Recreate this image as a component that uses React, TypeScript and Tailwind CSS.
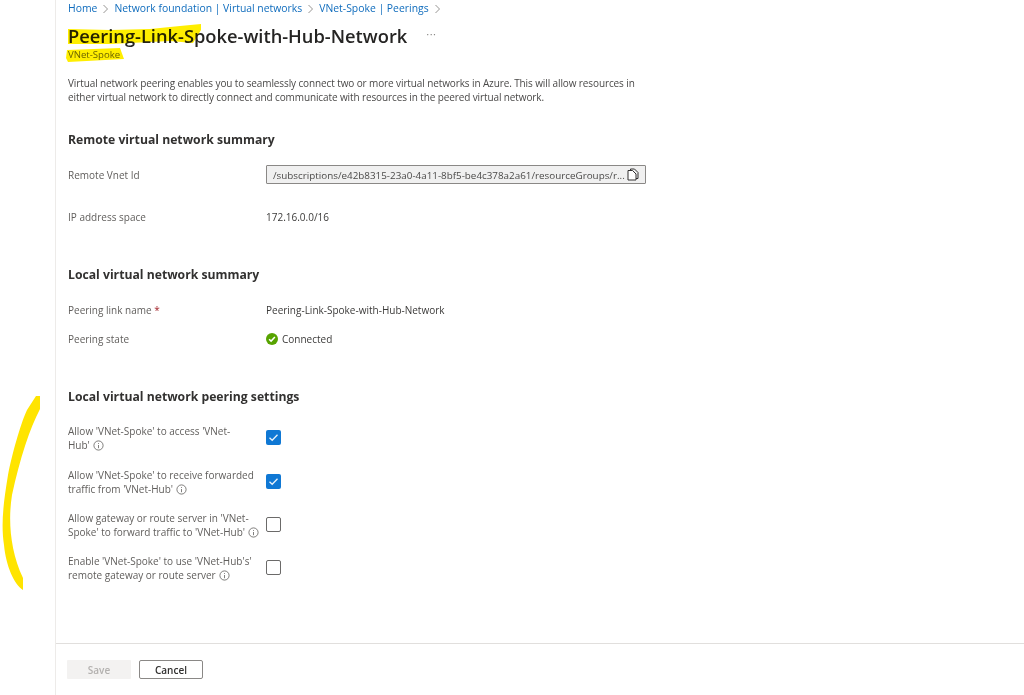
import React from "react";

const Chevron = () => (
  <svg width="7" height="10" viewBox="0 0 7 10" className="mx-[5px] shrink-0" fill="none" stroke="#8a8886" strokeWidth="0.9">
    <path d="M1.5 1 L5.5 5 L1.5 9" />
  </svg>
);

const Info = () => (
  <svg width="11" height="11" viewBox="0 0 11 11" className="inline-block ml-[3px] align-[-2px]" fill="none" stroke="#605e5c" strokeWidth="0.8">
    <circle cx="5.5" cy="5.5" r="4.6" />
    <path d="M5.5 5 V8.2" />
    <path d="M5.5 3 V3.9" />
  </svg>
);

const Box = ({ checked }: { checked?: boolean }) =>
  checked ? (
    <div className="w-[15px] h-[15px] rounded-[2px] bg-[#0f78d4] flex items-center justify-center">
      <svg width="11" height="11" viewBox="0 0 11 11" fill="none" stroke="#e8f2fb" strokeWidth="1.3">
        <path d="M1.5 5.8 L4.2 8.3 L9.5 2.8" />
      </svg>
    </div>
  ) : (
    <div className="w-[15px] h-[15px] rounded-[2px] border border-[#6b6a69] bg-white" />
  );

const H2 = ({ children, cls }: { children: React.ReactNode; cls: string }) => (
  <h2 className={`text-[12.2px] leading-[18px] font-bold text-[#323130] ${cls}`}>{children}</h2>
);

const Row = ({ label, children, cls }: { label: React.ReactNode; children: React.ReactNode; cls: string }) => (
  <div className={`flex items-center h-[14px] ${cls}`}>
    <div className="w-[198px] shrink-0">{label}</div>
    <div className="flex items-center text-[#3b3a39]">{children}</div>
  </div>
);

const CheckRow = ({ lines, checked, cls }: { lines: [string, string]; checked?: boolean; cls: string }) => (
  <div className={`flex items-center ${cls}`}>
    <div className="w-[198px] shrink-0 leading-[14px] h-[28px] whitespace-nowrap">
      <div>{lines[0]}</div>
      <div>
        {lines[1]}
        <Info />
      </div>
    </div>
    <div className="-mt-[2px]">
      <Box checked={checked} />
    </div>
  </div>
);

export default function App() {
  return (
    <div
      className="relative w-[1024px] h-[695px] overflow-hidden bg-white text-[10px] text-[#605e5c]"
      style={{ fontFamily: '"Open Sans", "Noto Sans", sans-serif' }}
    >
      <div className="ml-[55px] h-full border-l border-[#edebe9] flex flex-col">
        <div className="flex-1 pl-[12px] pt-[2px]">
          <nav className="flex items-center h-[14px] text-[#0f6cbd] text-[10.4px]">
            <span>Home</span>
            <Chevron />
            <span>Network foundation | Virtual networks</span>
            <Chevron />
            <span>VNet-Spoke | Peerings</span>
            <Chevron />
          </nav>
          <div className="flex items-center mt-[8px] h-[24px]">
            <h1 className="text-[18.3px] leading-[24px] font-semibold text-[#252423] whitespace-nowrap">
              Peering-Link-Spoke-with-Hub-Network
            </h1>
            <span className="ml-[19px] text-[#8a8886] text-[11px] tracking-[0.5px] -mt-[3px]">···</span>
          </div>
          <div className="h-[14px] leading-[14px] text-[9.6px] text-[#6b6a3a]">VNet-Spoke</div>
          <div className="mt-[14px] leading-[14px] text-[#4a4948] whitespace-nowrap tracking-[-0.11px]">
            <div>Virtual network peering enables you to seamlessly connect two or more virtual networks in Azure. This will allow resources in</div>
            <div>either virtual network to directly connect and communicate with resources in the peered virtual network.</div>
          </div>

          <H2 cls="mt-[27px]">Remote virtual network summary</H2>
          <div className="flex items-center mt-[16px] h-[19px]">
            <div className="w-[198px] shrink-0 pt-[2px]">Remote Vnet Id</div>
            <div className="w-[380px] h-[19px] bg-[#f0f0f0] border border-[#8a8886] rounded-[1px] flex items-center justify-between pl-[6px] pr-[6px] text-[#4a4948] whitespace-nowrap">
              <span className="text-[9.85px] pt-[1px]">/subscriptions/e42b8315-23a0-4a11-8bf5-be4c378a2a61/resourceGroups/r...</span>
              <svg width="12" height="13" viewBox="0 0 12 13" fill="none" stroke="#323130" strokeWidth="1" className="shrink-0">
                <path d="M3.5 2.5 V1 H7.5 L11 4.5 V10.5 H9" />
                <path d="M1 2.5 H5.5 L9 6 V12 H1 Z" fill="#fff" />
              </svg>
            </div>
          </div>
          <Row label="IP address space" cls="mt-[26px]">172.16.0.0/16</Row>

          <H2 cls="mt-[42px]">Local virtual network summary</H2>
          <Row
            label={
              <>
                Peering link name <span className="text-[#a4262c]">*</span>
              </>
            }
            cls="mt-[19px]"
          >
            Peering-Link-Spoke-with-Hub-Network
          </Row>
          <Row label="Peering state" cls="mt-[15px]">
            <svg width="12" height="12" viewBox="0 0 12 12" className="mr-[4px]">
              <circle cx="6" cy="6" r="6" fill="#57a300" />
              <path d="M3.1 6.2 L5.1 8.1 L8.9 4.1" fill="none" stroke="#fff" strokeWidth="1.5" />
            </svg>
            Connected
          </Row>

          <H2 cls="mt-[42px]">Local virtual network peering settings</H2>
          <CheckRow lines={["Allow 'VNet-Spoke' to access 'VNet-", "Hub'"]} checked cls="mt-[18px]" />
          <CheckRow lines={["Allow 'VNet-Spoke' to receive forwarded", "traffic from 'VNet-Hub'"]} checked cls="mt-[16px]" />
          <CheckRow lines={["Allow gateway or route server in 'VNet-", "Spoke' to forward traffic to 'VNet-Hub'"]} cls="mt-[15px]" />
          <CheckRow lines={["Enable 'VNet-Spoke' to use 'VNet-Hub's'", "remote gateway or route server"]} cls="mt-[15px]" />
        </div>
        <footer className="h-[52px] shrink-0 border-t border-[#e1dfdd] flex items-start pl-[11px] pt-[16px] gap-[8px]">
          <button className="w-[64px] h-[19px] bg-[#f3f2f1] text-[#b3b1af] font-semibold rounded-[1px] leading-none">Save</button>
          <button className="w-[64px] h-[19px] bg-white border border-[#8a8886] text-[#323130] font-semibold rounded-[2px] leading-none">Cancel</button>
        </footer>
      </div>

      <svg className="absolute left-0 top-0 pointer-events-none" width="1024" height="695" viewBox="0 0 1024 695">
        <path
          d="M68 29 L110 30 L150 29 L180 26 L201 24 L201 30 L193 43 L170 41 L150 42 L110 44 L68 44 Z"
          fill="#ffee00"
          style={{ mixBlendMode: "multiply" }}
        />
        <path d="M67 50 L120 48 L124 59 L68 62 L66 58 Z" fill="#ffee00" style={{ mixBlendMode: "multiply" }} />
        <path
          d="M36 396 L40 396 L40 409 C30 428 20 458 12 495 C8 520 10 550 23 578 L23 590 C14 584 6 566 4 545 C1 525 3 505 8 475 C12 455 20 425 27 410 Z"
          fill="#ffe400"
        />
      </svg>
    </div>
  );
}
